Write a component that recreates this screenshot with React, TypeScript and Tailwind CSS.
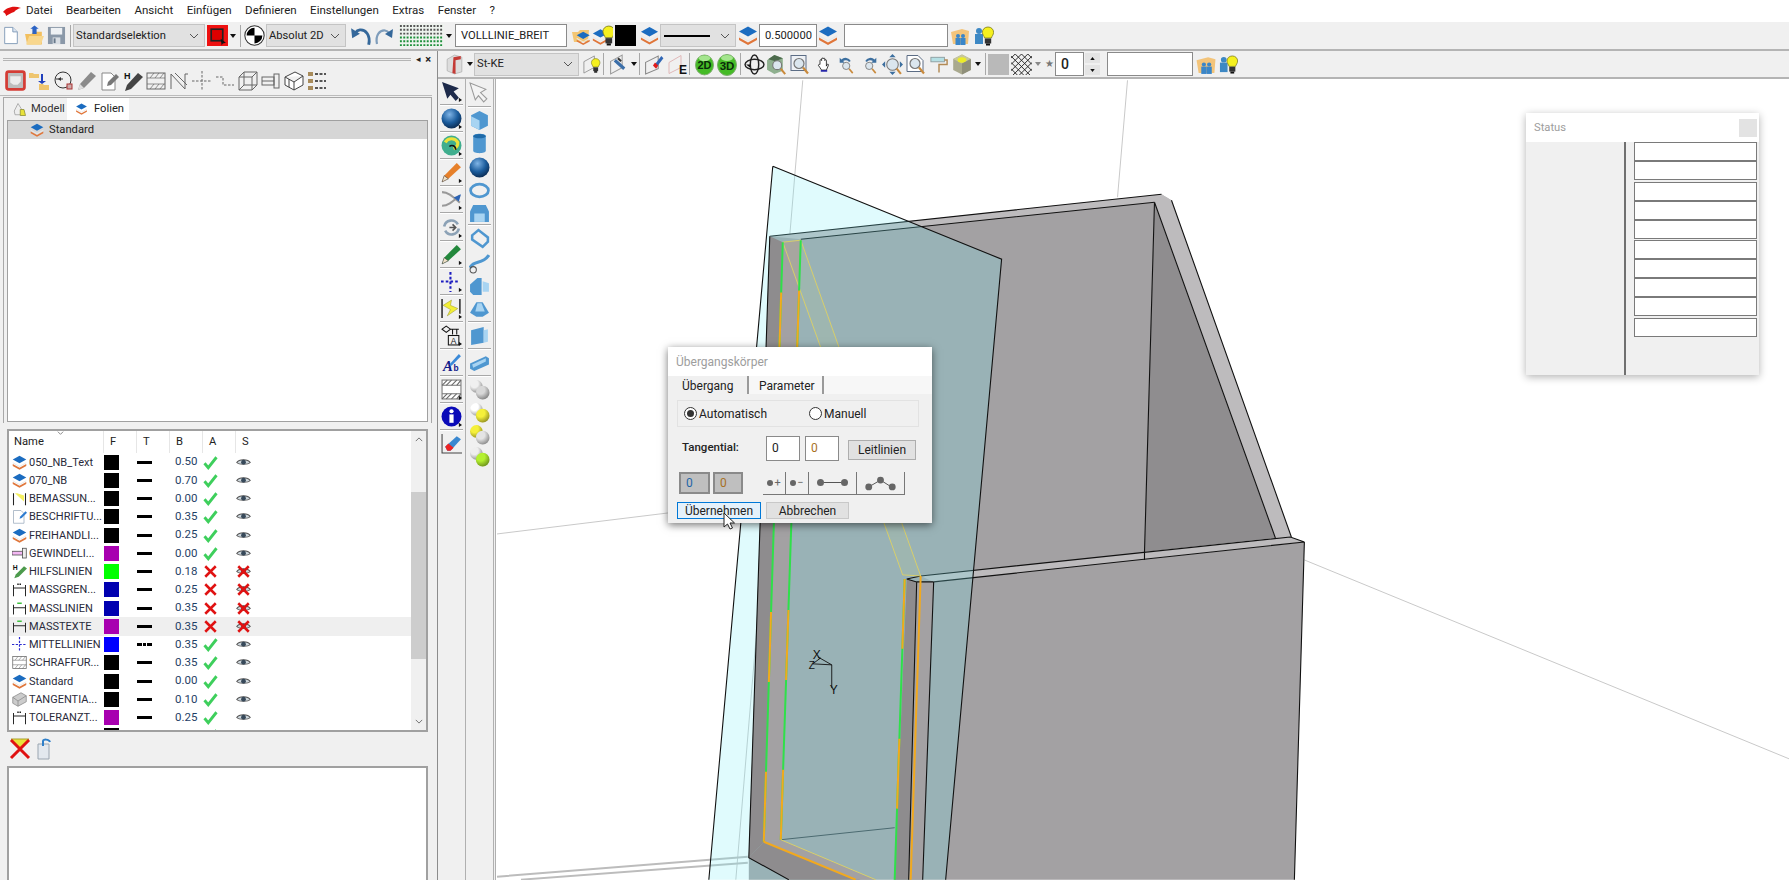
import type { ReactNode } from "react";

type P = { className?: string };

const Svg = ({ className, children }: P & { children: ReactNode }) => (
  <svg viewBox="0 0 20 20" className={`shrink-0 ${className ?? ""}`}>
    {children}
  </svg>
);

// shared icon parts
const Stack = () => (
  <>
    <path d="M10 1 19 6 10 11 1 6z" fill="#1b6cc0" />
    <path d="M1 9.500 10 14.500 19 9.500 19 11 10 16 1 11z" fill="#e9e9e9" />
    <path d="M1 12 10 17 19 12 19 14.500 10 19.500 1 14.500z" fill="#e0763a" />
  </>
);
const BulbShape = () => (
  <>
    <path d="M13 1c3.300 0 5.600 2.400 5.600 5.300 0 2.400-1.600 3.600-2.200 5.700h-6.800c-.6-2.100-2.200-3.300-2.200-5.700C7.400 3.400 9.700 1 13 1z" fill="#f5f01e" stroke="#7a7a20" strokeWidth=".8" />
    <rect x="9.800" y="12.500" width="6.400" height="5" fill="#333" />
    <rect x="11" y="17.500" width="4" height="2" fill="#111" />
  </>
);
const Layers = (p: P) => <Svg {...p}><Stack /></Svg>;
const LayersBulb = (p: P) => (
  <Svg {...p}>
    <g transform="scale(.8) translate(0 4)"><Stack /></g>
    <g transform="translate(3 0)"><BulbShape /></g>
  </Svg>
);
const FolderLayers = (p: P) => (
  <Svg {...p}>
    <path d="M1 6h6l2-2h9l-1 12H3z" fill="#f3c673" />
    <g transform="translate(5 5) scale(.72)"><Stack /></g>
  </Svg>
);
const FolderPeople = (p: P) => (
  <Svg {...p}>
    <path d="M1 6 12 3l7 2-1 13H3z" fill="#f3c47a" />
    <g fill="#3a86c8">
      <circle cx="8" cy="10" r="2" /><rect x="5.500" y="12" width="5" height="7" />
      <circle cx="13" cy="10" r="2" /><rect x="10.500" y="12" width="5" height="7" />
    </g>
  </Svg>
);
const PeopleBulb = (p: P) => (
  <Svg {...p}>
    <g fill="#3d88c4"><circle cx="5" cy="5" r="3" /><rect x="1" y="8" width="8" height="10" /></g>
    <g transform="translate(1 0)"><BulbShape /></g>
  </Svg>
);
const Arrow = ({ className, gray }: P & { gray?: boolean }) => (
  <svg viewBox="0 0 6 4" className={`shrink-0 ${className ?? ""}`}>
    <path d="M0 0h6L3 4z" fill={gray ? "#888" : "#111"} />
  </svg>
);
const Chevron = ({ className }: P) => (
  <svg viewBox="0 0 10 6" className={`shrink-0 ${className ?? ""}`}>
    <path d="M1 1l4 4 4-4" fill="none" stroke="#555" strokeWidth="1" />
  </svg>
);
const Sep = ({ className }: P) => <div className={`h-[22px] w-px shrink-0 bg-[#a8a8a8] ${className ?? ""}`} />;

const Combo = ({ className, children }: P & { children?: ReactNode }) => (
  <div className={`flex h-[23px] shrink-0 items-center justify-between border border-[#c4c4c4] bg-[#e1e1e1] pl-[2px] pr-[5px] text-[#222] ${className ?? ""}`}>
    <span className="flex-1">{children}</span>
    <Chevron className="h-[6px] w-[10px]" />
  </div>
);
const Field = ({ className, children }: P & { children?: ReactNode }) => (
  <div className={`flex h-[23px] shrink-0 items-center border border-[#8a8a8a] bg-white pl-[5px] text-[#222] ${className ?? ""}`}>{children}</div>
);

// row 1 icons
const NewDoc = (p: P) => (
  <Svg {...p}><path d="M3 1h9l5 5v13H3z" fill="#fff" stroke="#7d97b5" /><path d="M12 1v5h5" fill="#dbe6f2" stroke="#7d97b5" /></Svg>
);
const OpenFolder = (p: P) => (
  <Svg {...p}>
    <path d="M1 8h6l2-2h8v12H3z" fill="#f2bf5e" />
    <path d="M2 18 5 10h14l-3 8z" fill="#f8d78e" />
    <path d="M8 8V3h-2l4-3 4 3h-2v5z" fill="#2c63c4" />
  </Svg>
);
const Save = (p: P) => (
  <Svg {...p}><path d="M1 1h18v18H1z" fill="#8a98a8" /><rect x="4" y="2" width="12" height="7" fill="#eef1f4" /><rect x="6" y="12" width="8" height="7" fill="#d8dde3" /><rect x="7" y="13" width="2" height="5" fill="#67788a" /></Svg>
);
const RedBtn = (p: P) => (
  <Svg {...p}><rect width="20" height="20" fill="#ee1111" /><rect x="4" y="4" width="11" height="11" fill="#d00" stroke="#222" strokeWidth="1.600" /><path d="M13 13l5 4-3 .5-1 2z" fill="#111" /></Svg>
);
const Target = (p: P) => (
  <Svg {...p}><circle cx="10" cy="10" r="9.200" fill="#fff" stroke="#333" /><path d="M10 2.500a7.500 7.500 0 0 0-7.500 7.500H10zM10 10v7.500a7.500 7.500 0 0 0 7.500-7.500z" fill="#000" /></Svg>
);
const Undo = (p: P) => (
  <Svg {...p}><path d="M17 18C19 9 14 4 9 4.500 7.500 4.700 6 5.500 5 7" fill="none" stroke="#35689a" strokeWidth="2.600" /><path d="M1 3l1 9 7-4z" fill="#35689a" /></Svg>
);
const Redo = (p: P) => (
  <Svg {...p}><path d="M3 18C1 9 6 4 11 4.500c1.500.2 3 1 4 2.500" fill="none" stroke="#7f9dbb" strokeWidth="2.200" /><path d="M19 3l-1 9-7-4z" fill="#35689a" /></Svg>
);
const DotGrid = ({ className }: P) => (
  <svg viewBox="0 0 47 24" className={`shrink-0 ${className ?? ""}`}>
    <rect width="47" height="24" fill="#eef3ee" />
    {[2, 6, 10, 14, 18, 22].map((y) => (
      <line key={y} x1="1" x2="46" y1={y} y2={y} stroke={y > 13 ? "#1d8f3a" : "#555"} strokeWidth="2" strokeDasharray="2 1.500" />
    ))}
  </svg>
);

// row 2 icons
const PartIcon = (p: P) => (
  <Svg {...p}>
    <path d="M3 5 10 1 17 3v14l-7 2-7-3z" fill="#ddd" stroke="#999" strokeWidth=".5" />
    <path d="M9 3l7-1v3l-5 1v13l-3-1z" fill="#c43a35" />
  </Svg>
);
const PlaneOutline = () => <path d="M2 7 13 1v12L2 19z" fill="none" stroke="#9a9a9a" />;
const PlaneBulb = (p: P) => (
  <Svg {...p}><PlaneOutline /><g transform="translate(4 3) scale(.8)"><BulbShape /></g></Svg>
);
const PlaneTool = (p: P) => (
  <Svg {...p}><PlaneOutline /><path d="M6 6l9 8" stroke="#3b6ea8" strokeWidth="3" /><path d="M9 4l3 3" stroke="#333" strokeWidth="2" /></Svg>
);
const PlanePencil = (p: P) => (
  <Svg {...p}><path d="M2 8 14 2v12L2 19z" fill="none" stroke="#888" /><path d="M10 11 17 2l2 2-7 9z" fill="#2f66b5" /><path d="M9 11l3 3 2-3-3-3z" fill="#e01b1b" /></Svg>
);
const PlaneE = (p: P) => (
  <Svg {...p}><path d="M1 8 13 1v12L1 19z" fill="none" stroke="#e0b8b8" /><text x="11" y="19" fontSize="12" fontWeight="700" fontFamily="Liberation Sans" fill="#111">E</text></Svg>
);
const Dim = ({ className, label }: P & { label: string }) => (
  <svg viewBox="0 0 20 24" className={`shrink-0 ${className ?? ""}`}>
    <ellipse cx="10" cy="13" rx="9.500" ry="10.500" fill="#45bb26" stroke="#7fae70" />
    <ellipse cx="10" cy="6" rx="6" ry="3" fill="#a4e58e" />
    <text x="10" y="17.500" textAnchor="middle" fontSize="11.500" fontWeight="700" fontFamily="Liberation Sans" fill="#0a2a0a">{label}</text>
  </svg>
);
const Orbit = (p: P) => (
  <Svg {...p}><ellipse cx="10" cy="10" rx="9" ry="5" fill="none" stroke="#222" strokeWidth="1.400" /><ellipse cx="10" cy="10" rx="4" ry="9" fill="none" stroke="#222" strokeWidth="1.400" /><path d="M2 10l4 3v-3z" fill="#111" /></Svg>
);
const Lens = () => (
  <>
    <circle cx="9" cy="9" r="5" fill="#dbe6ee" stroke="#777" strokeWidth="1.200" />
    <path d="M13 13l5 6" stroke="#c98a3c" strokeWidth="2.200" />
  </>
);
const BoxZoom = (p: P) => (
  <Svg {...p}><path d="M1 6 8 1l8 3v12l-8 3-7-4z" fill="#8fb08f" /><path d="M8 1l8 3-7 3-7-2z" fill="#4c6a4c" /><g transform="translate(3 3) scale(.85)"><Lens /></g></Svg>
);
const WinZoom = (p: P) => (
  <Svg {...p}><rect x="1" y="1" width="15" height="15" fill="#eef1f5" stroke="#5c6d85" /><Lens /></Svg>
);
const Hand = (p: P) => (
  <Svg {...p}>
    <path d="M5 10V5a1 1 0 0 1 2 0V3a1 1 0 0 1 2 0v0a1 1 0 0 1 2 0v2a1 1 0 0 1 2 0v7l1-2c1-1 2 0 1.500 1L13 17H7l-2-3-2-3c0-1 1-1.500 2-1z" fill="#fff" stroke="#111" />
    <rect x="6" y="17" width="8" height="2" fill="#1b1ba8" />
  </Svg>
);
const RotZoom = ({ className, flip }: P & { flip?: boolean }) => (
  <Svg className={className}>
    <g transform={flip ? "translate(20 0) scale(-1 1)" : undefined}>
      <path d="M15 6A7 7 0 0 0 4 4L2 2v6h6L6 6a5 5 0 0 1 7 1z" fill="#3d6f9f" />
    </g>
    <g transform="translate(2 4) scale(.85)"><Lens /></g>
  </Svg>
);
const PanZoom = (p: P) => (
  <Svg {...p}>
    <path d="M10 0l3 3H7zM10 20l-3-3h6zM0 10l3-3v6zM20 10l-3 3V7z" fill="#3d6f9f" />
    <circle cx="10" cy="10" r="5.500" fill="#dbe6ee" stroke="#777" />
    <path d="M14 14l4 5" stroke="#c98a3c" strokeWidth="2" />
  </Svg>
);
const PageZoom = (p: P) => (
  <Svg {...p}><path d="M1 1h11l5 5v11H1z" fill="#fff" stroke="#5c6d85" /><Lens /></Svg>
);
const Roller = (p: P) => (
  <Svg {...p}><rect x="1" y="2" width="15" height="5" fill="#b5e0e4" stroke="#8c9c9e" /><path d="M16 5h3v5h-9v9" fill="none" stroke="#b28a55" strokeWidth="1.600" /></Svg>
);
const YellowCube = (p: P) => (
  <Svg {...p}><path d="M2 5 10 1l8 4v10l-8 4-8-4z" fill="#a9a98e" /><path d="M2 5 10 1l8 4-8 4z" fill="#c8c89a" /><ellipse cx="10" cy="6" rx="4" ry="2.500" fill="#ecec28" /><path d="M10 9v10l8-4V5z" fill="#8f8f7a" /></Svg>
);
const Hatch = (p: P) => (
  <Svg {...p}>
    <path d="M0 4 4 0M0 10 10 0M0 16 16 0M2 20 20 2M8 20 20 8M14 20 20 14M0 2 18 20M0 8 12 20M0 14 6 20M4 0 20 16M10 0 20 10M16 0 20 4" stroke="#222" strokeWidth=".9" fill="none" />
  </Svg>
);

// dock icons
const G = "#666";
const Gs = { fill: "none", stroke: G, strokeWidth: 1 };
const RedFrame = (p: P) => (
  <Svg {...p}><rect x="1.500" y="1.500" width="17" height="17" rx="2" fill="#bdbdbd" stroke="#d43c35" strokeWidth="2.600" /><path d="M5 6h10v5l-3 3H8l-3-2z" fill="#ececec" /></Svg>
);
const FolderDown = (p: P) => (
  <Svg {...p}><path d="M0 2h4l1 1h5v4H0zM10 13h4l1 1h5v5H10z" fill="#eec56e" /><path d="M12 3v7H9l4 3 4-3h-3V3z" fill="#1f3fbc" /></Svg>
);
const Gauge = (p: P) => (
  <Svg {...p}><circle cx="9" cy="9" r="8" {...Gs} stroke="#333" /><path d="M2 8h7" stroke="#333" /><path d="M4 8l3-2v4z" fill="#333" /><rect x="13" y="13" width="5" height="5" fill="#caa" stroke="#a33" /></Svg>
);
const GrayPencil = (p: P) => (
  <Svg {...p}><path d="M14 1l5 4L7 17l-6 2 2-6z" fill="#8b8b8b" /><path d="M3 13l4 4-6 2z" fill="#ddd" /></Svg>
);
const DocPencil = (p: P) => (
  <Svg {...p}><path d="M2 2h9l4 4v13H2z" fill="#fff" stroke="#888" /><path d="M16 3l3 3-8 8-4 1 1-4z" fill="#777" /></Svg>
);
const HPencil = (p: P) => (
  <Svg {...p}><path d="M15 2l5 4L8 18l-6 2 2-6z" fill="#444" /><text x="1" y="8" fontSize="9" fontWeight="700" fontFamily="Liberation Sans" fill="#111">H</text></Svg>
);
const HatchBox = (p: P) => (
  <Svg {...p}><rect x="1" y="2" width="18" height="16" {...Gs} /><path d="M1 7h18M1 13h18M4 7l4-5M9 7l4-5M14 7l4-5M4 18l4-5M9 18l4-5M14 18l4-5" {...Gs} strokeWidth=".7" /></Svg>
);
const NShape = (p: P) => (
  <Svg {...p}><path d="M2 3v15M2 3l14 15V3M6 2l12 12M16 3l3 0" {...Gs} /></Svg>
);
const CrossDash = (p: P) => (
  <Svg {...p}><path d="M0 10h20M10 0v20" {...Gs} strokeDasharray="2.500 1.500" /></Svg>
);
const StepDash = (p: P) => (
  <Svg {...p}><path d="M1 6h7v8h11" {...Gs} strokeDasharray="2.500 1.500" /></Svg>
);
const WireCube = (p: P) => (
  <Svg {...p}><path d="M1 6h13v13H1zM6 1h13v13H6zM1 6l5-5M14 6l5-5M14 19l5-5M1 19l5-5" {...Gs} /></Svg>
);
const Bolt = (p: P) => (
  <Svg {...p}><rect x="1" y="6" width="12" height="8" {...Gs} /><path d="M1 10h12" {...Gs} /><rect x="13" y="3" width="5" height="14" {...Gs} /></Svg>
);
const SolidBox = (p: P) => (
  <Svg {...p}><path d="M1 6 11 1l8 4v9l-9 5-9-5zM1 6l9 5 9-6M10 11v8M5 8l0 8" fill="#fff" stroke="#444" /></Svg>
);
const DotList = (p: P) => (
  <Svg {...p}>
    {[3, 10, 17].map((y) => (
      <g key={y}><rect x="1" y={y - 2} width="5" height="4" fill="#a88b5a" /><path d={`M8 ${y}h11`} stroke="#222" strokeWidth="1.600" strokeDasharray="3 1.500" /></g>
    ))}
  </Svg>
);
const ModelIcon = (p: P) => (
  <Svg {...p}><path d="M3 12 8 2l5 8v7H4z" fill="#eee" stroke="#999" /><path d="M11 10h5l2 8h-7z" fill="#e8e23a" stroke="#8a8a30" /></Svg>
);

// table icons
const DimIcon = (p: P) => (
  <Svg {...p}><path d="M2 3v16M18 3v16" stroke="#222" strokeWidth="1.400" /><path d="M4 3l12 11v-8L7 3z" fill="#f5f060" /></Svg>
);
const DocBlue = (p: P) => (
  <Svg {...p}><path d="M2 2h10l4 4v13H2z" fill="#fff" stroke="#9ab" /><path d="M18 3l2 2-7 7-3 1 1-3z" fill="#2d7bd0" /></Svg>
);
const Thread = (p: P) => (
  <Svg {...p}><rect x="0" y="7" width="14" height="5" fill="#f3b8f3" stroke="#444" /><rect x="14" y="3" width="5" height="13" fill="#eee" stroke="#444" /></Svg>
);
const HGreen = (p: P) => (
  <Svg {...p}><path d="M16 3l4 3L9 17l-6 2 2-5z" fill="#4c9a4c" /><text x="1" y="8" fontSize="9" fontWeight="700" fontFamily="Liberation Sans" fill="#111">H</text></Svg>
);
const Bracket = (p: P) => (
  <Svg {...p}><path d="M2 4v15M18 4v15M2 8h16" stroke="#222" strokeWidth="1.300" /><path d="M7 3h6" stroke="#222" strokeWidth="2" strokeDasharray="2 1" /></Svg>
);
const BracketG = (p: P) => (
  <Svg {...p}><path d="M2 5v13M18 5v13M2 9h16" stroke="#222" strokeWidth="1.300" /><path d="M7 3h6" stroke="#3fc13f" strokeWidth="2" /></Svg>
);
const CrossBlue = (p: P) => (
  <Svg {...p}><path d="M0 10h20M10 0v20" fill="none" stroke="#2a2ad0" strokeWidth="1.600" strokeDasharray="3 2" /></Svg>
);
const BoxGray = (p: P) => (
  <Svg {...p}><path d="M1 7 12 1l7 4v8L8 19l-7-4z" fill="#ccc" stroke="#888" /><path d="M1 7l7 5 11-7M8 12v7" fill="none" stroke="#888" /></Svg>
);
const Check = (p: P) => (
  <Svg {...p}><path d="M2 11l5 6L18 3" fill="none" stroke="#3ecf5c" strokeWidth="3.800" /></Svg>
);
const XMark = (p: P) => (
  <Svg {...p}><path d="M3 3l14 14M17 3 3 17" fill="none" stroke="#e01212" strokeWidth="3.400" /></Svg>
);
const Eye = ({ className, off }: P & { off?: boolean }) => (
  <Svg className={className}>
    <path d="M1 10c3-5 15-5 18 0-3 3-15 3-18 0z" fill="#cdd6dc" stroke="#555" strokeWidth="1.400" />
    <circle cx="10" cy="9.500" r="3.200" fill="#37495a" />
    {off && <path d="M3 3l14 14M17 3 3 17" fill="none" stroke="#e01212" strokeWidth="3.400" />}
  </Svg>
);

// vertical toolbar icons
const Mini = () => <path d="M17 16l3 2-3 2z" fill="#111" />;
const DarkArrow = (p: P) => (
  <Svg {...p}><path d="M1 1l16 6-5 3 5 6-3 3-5-6-3 4z" fill="#1d2a4a" /><Mini /></Svg>
);
const WhiteArrow = (p: P) => (
  <Svg {...p}><path d="M1 1l15 6-5 3 6 6-3 3-5-6-3 4z" fill="#f4f4f4" stroke="#9a9a9a" /></Svg>
);
const BlueBall = (p: P) => (
  <Svg {...p}><circle cx="10" cy="10" r="9.500" fill="url(#ballBlue)" /><Mini /></Svg>
);
const SwirlBall = (p: P) => (
  <Svg {...p}><circle cx="10" cy="10" r="9.500" fill="#3fae8e" /><path d="M4 7a7 7 0 0 1 12 0 6 6 0 0 1-4 6" fill="none" stroke="#ece23a" strokeWidth="3" /><path d="M8 11c2-2 6-1 6 3" fill="none" stroke="#111" strokeWidth="1.500" /><Mini /></Svg>
);
const ColPencil = ({ className, color }: P & { color: string }) => (
  <Svg className={className}>
    <path d="M15 1l4 4L7 16l-6 3 2-6z" fill={color} />
    <path d="M3 13l4 3-6 3z" fill="#f1e2c8" stroke="#333" strokeWidth=".5" />
    <Mini />
  </Svg>
);
const Scissors = (p: P) => (
  <Svg {...p}><path d="M1 3c6 0 10 4 17 10M1 16c6 0 10-4 17-10" fill="none" stroke="#999" strokeWidth="2" /><path d="M12 8l7-3-2 7z" fill="#2b63b5" /><Mini /></Svg>
);
const Rotate = (p: P) => (
  <Svg {...p}><path d="M3 9a7 7 0 0 1 13-2M17 11a7 7 0 0 1-13 2" fill="none" stroke="#8ca2b6" strokeWidth="2.500" /><path d="M8 10h6M11 7l3 3-3 3" fill="none" stroke="#555" strokeWidth="1.500" /><Mini /></Svg>
);
const BlueCross = (p: P) => (
  <Svg {...p}><path d="M0 10h18M9 1v19" fill="none" stroke="#1c1cc0" strokeWidth="2" strokeDasharray="2.500 2" /><Mini /></Svg>
);
const YellowDim = (p: P) => (
  <Svg {...p}><path d="M1 1v18M18 1v14" stroke="#222" strokeWidth="1.400" /><path d="M2 7 10 2l-1 5 7 3-10 7 3-6z" fill="#f2ee35" stroke="#9a9a30" strokeWidth=".5" /><Mini /></Svg>
);
const TextBox = (p: P) => (
  <Svg {...p}>
    <path d="M1 4l4-3 4 3-4 3z" fill="none" stroke="#111" /><path d="M9 4h8M11 4v5M15 4v5" stroke="#111" />
    <rect x="7" y="10" width="10" height="9" fill="none" stroke="#111" />
    <text x="12" y="18" textAnchor="middle" fontSize="8" fontFamily="Liberation Sans" fill="#111">A</text>
    <Mini />
  </Svg>
);
const ABTool = (p: P) => (
  <Svg {...p}>
    <text x="2" y="18" fontSize="14" fontWeight="700" fontStyle="italic" fontFamily="Liberation Serif" fill="#111a8a">A</text>
    <text x="12" y="18" fontSize="8" fontWeight="700" fontFamily="Liberation Sans" fill="#111a8a">b</text>
    <path d="M8 12 17 2l2 2-9 9z" fill="#3b8ad8" />
  </Svg>
);
const HatchTool = (p: P) => (
  <Svg {...p}><rect x="1" y="1" width="18" height="18" fill="#fff" stroke="#777" /><path d="M1 6l5-5M5 6l5-5M10 6l5-5M15 6l4-5M1 19l5-5M5 19l5-5M10 19l5-5M15 19l4-5" stroke="#666" /><path d="M1 6h18M1 14h18" stroke="#777" /><Mini /></Svg>
);
const InfoTool = (p: P) => (
  <Svg {...p}><circle cx="10" cy="10" r="9.500" fill="#0a0ab8" /><rect x="8" y="8" width="4" height="8" fill="#fff" /><circle cx="10" cy="5" r="2" fill="#fff" /><Mini /></Svg>
);
const EraserTool = (p: P) => (
  <Svg {...p}><path d="M1 1v18h19" fill="none" stroke="#444" /><path d="M4 13 15 3l4 3-10 11H6z" fill="#3a88d0" /><path d="M4 13l3-3 5 4-3 3H6z" fill="#e22" /></Svg>
);
const Sol = ({ className, d, d2 }: P & { d: string; d2: string }) => (
  <Svg className={className}><path d={d} fill="#4f97d0" /><path d={d2} fill="#a8d4f2" /></Svg>
);
const TwoBalls = ({ className, a, b }: P & { a: string; b: string }) => (
  <Svg className={className}>
    <circle cx="7" cy="7" r="6" fill={a} /><circle cx="7" cy="7" r="6" fill="url(#ballShade)" />
    <circle cx="13" cy="13" r="6.500" fill={b} /><circle cx="13" cy="13" r="6.500" fill="url(#ballShade)" />
  </Svg>
);

const rows: { i: (p: P) => ReactNode; n: string; c: string; b: string; on: boolean; dash?: boolean; hl?: boolean }[] = [
  { i: Layers, n: "050_NB_Text", c: "bg-black", b: "0.50", on: true },
  { i: Layers, n: "070_NB", c: "bg-black", b: "0.70", on: true },
  { i: DimIcon, n: "BEMASSUN...", c: "bg-black", b: "0.00", on: true },
  { i: DocBlue, n: "BESCHRIFTU...", c: "bg-black", b: "0.35", on: true },
  { i: Layers, n: "FREIHANDLI...", c: "bg-black", b: "0.25", on: true },
  { i: Thread, n: "GEWINDELI...", c: "bg-[#a800b0]", b: "0.00", on: true },
  { i: HGreen, n: "HILFSLINIEN", c: "bg-[#00ff00]", b: "0.18", on: false },
  { i: Bracket, n: "MASSGREN...", c: "bg-[#0000b0]", b: "0.25", on: false },
  { i: BracketG, n: "MASSLINIEN", c: "bg-[#0000b0]", b: "0.35", on: false },
  { i: BracketG, n: "MASSTEXTE", c: "bg-[#a800b0]", b: "0.35", on: false, hl: true },
  { i: CrossBlue, n: "MITTELLINIEN", c: "bg-[#0000ff]", b: "0.35", on: true, dash: true },
  { i: HatchBox, n: "SCHRAFFUR...", c: "bg-black", b: "0.35", on: true },
  { i: Layers, n: "Standard", c: "bg-black", b: "0.00", on: true },
  { i: BoxGray, n: "TANGENTIA...", c: "bg-black", b: "0.10", on: true },
  { i: Bracket, n: "TOLERANZT...", c: "bg-[#a800b0]", b: "0.25", on: true },
  { i: () => null, n: "", c: "bg-black", b: "", on: true },
];

const TableRow = ({ r }: { r: (typeof rows)[number] }) => {
  const Icon = r.i;
  return (
    <div className={`flex h-[18.25px] shrink-0 items-center text-[11px] ${r.hl ? "bg-[#efefef]" : ""}`}>
      <div className="ml-[3px] flex w-[15px] shrink-0">
        <Icon className="h-[15px] w-[15px]" />
      </div>
      <span className="ml-[2px] w-[75px] shrink-0 whitespace-nowrap text-[#2a2a3a]">{r.n}</span>
      <div className={`h-[15px] w-[15px] shrink-0 ${r.c}`} />
      {r.dash ? (
        <div className="ml-[18px] flex w-[15px] shrink-0 gap-px">
          <div className="h-[3px] w-[5px] bg-black" /><div className="h-[3px] w-[3px] bg-black" /><div className="h-[3px] w-[5px] bg-black" />
        </div>
      ) : (
        <div className="ml-[18px] h-[3px] w-[15px] shrink-0 bg-black" />
      )}
      <span className="ml-[23px] w-[28px] shrink-0 text-[11.500px] text-[#1f3f66]">{r.b}</span>
      {r.on ? <Check className="h-[15px] w-[15px]" /> : <XMark className="h-[15px] w-[15px]" />}
      <Eye off={!r.on} className="ml-[18px] h-[15px] w-[15px]" />
    </div>
  );
};

const Menu = () => (
  <div className="flex h-[22px] shrink-0 items-center bg-white pl-[3px] text-[11.500px] text-[#222]">
    <svg viewBox="0 0 18 10" className="h-[10px] w-[18px] shrink-0">
      <path d="M0 6C3 2 10-1 18 2c-3 .5-5 2-7 4-3 1-5 2-8 4 0-2-1-3-3-4z" fill="#e01010" />
    </svg>
    <div className="ml-[5px] flex gap-[13.500px]">
      {["Datei", "Bearbeiten", "Ansicht", "Einfügen", "Definieren", "Einstellungen", "Extras", "Fenster", "?"].map((m) => (
        <span key={m}>{m}</span>
      ))}
    </div>
  </div>
);

const TopToolbar = () => (
  <div className="flex h-[29px] shrink-0 items-center border-b-2 border-[#b4b4b4] bg-[#f0f0f0]">
    <NewDoc className="ml-[2px] h-[23px] w-[18px]" />
    <OpenFolder className="ml-[4px] h-[22px] w-[21px]" />
    <Save className="ml-[2px] h-[21px] w-[19px]" />
    <Sep className="ml-[4px]" />
    <Combo className="ml-[2px] w-[132px]">Standardselektion</Combo>
    <RedBtn className="ml-[2px] h-[21px] w-[21px]" />
    <Arrow className="ml-[2px] h-[4px] w-[6px]" />
    <Sep className="ml-[4px]" />
    <Target className="ml-[3px] h-[21px] w-[21px]" />
    <Combo className="ml-px w-[80px]">Absolut 2D</Combo>
    <Undo className="ml-[4px] h-[22px] w-[22px]" />
    <Redo className="ml-[2px] h-[22px] w-[20px]" />
    <DotGrid className="ml-[4px] h-[23px] w-[47px]" />
    <Arrow className="ml-px h-[4px] w-[6px]" />
    <Field className="ml-[3px] w-[112px]">VOLLLINIE_BREIT</Field>
    <FolderLayers className="ml-[4px] h-[20px] w-[20px]" />
    <LayersBulb className="ml-px h-[21px] w-[21px]" />
    <div className="ml-[2px] h-[21px] w-[21px] shrink-0 bg-black" />
    <Layers className="ml-[4px] h-[21px] w-[19px]" />
    <Combo className="ml-px w-[76px]">
      <div className="mx-[1px] h-[2px] w-[46px] bg-black" />
    </Combo>
    <Layers className="ml-[2px] h-[21px] w-[20px]" />
    <Field className="ml-px w-[58px] pl-[4px] text-[#1f3f66]">0.500000</Field>
    <Layers className="ml-px h-[21px] w-[20px]" />
    <Field className="ml-[6px] w-[104px]" />
    <FolderPeople className="ml-[2px] h-[20px] w-[20px]" />
    <PeopleBulb className="ml-[4px] h-[22px] w-[20px]" />
  </div>
);

const ViewToolbar = () => (
  <div className="flex h-[28px] shrink-0 items-center border-b-2 border-[#b4b4b4] bg-[#f0f0f0]">
    <PartIcon className="ml-[6px] h-[21px] w-[21px]" />
    <Arrow className="ml-[2px] h-[4px] w-[6px]" />
    <Combo className="ml-px h-[22px] w-[105px]">St-KE</Combo>
    <PlaneBulb className="ml-[3px] h-[21px] w-[19px]" />
    <Sep className="ml-[2px]" />
    <PlaneTool className="ml-[4px] h-[21px] w-[22px]" />
    <Arrow className="ml-px h-[4px] w-[6px]" />
    <Sep className="ml-[2px]" />
    <PlanePencil className="ml-[3px] h-[21px] w-[22px]" />
    <PlaneE className="ml-[3px] h-[21px] w-[20px]" />
    <Sep className="ml-px" />
    <Dim label="2D" className="ml-[5px] h-[24px] w-[19px]" />
    <Dim label="3D" className="ml-[3px] h-[24px] w-[20px]" />
    <Sep className="ml-[3px]" />
    <Orbit className="ml-[3px] h-[21px] w-[21px]" />
    <BoxZoom className="ml-px h-[21px] w-[21px]" />
    <WinZoom className="ml-[3px] h-[21px] w-[20px]" />
    <Hand className="ml-[6px] h-[23px] w-[16px]" />
    <RotZoom className="ml-[6px] h-[21px] w-[17px]" />
    <RotZoom flip className="ml-[6px] h-[21px] w-[17px]" />
    <PanZoom className="ml-[4px] h-[21px] w-[21px]" />
    <PageZoom className="ml-[3px] h-[21px] w-[20px]" />
    <Roller className="ml-[4px] h-[21px] w-[18px]" />
    <YellowCube className="ml-[3px] h-[23px] w-[22px]" />
    <Arrow className="ml-[2px] h-[4px] w-[6px]" />
    <Sep className="ml-[4px]" />
    <div className="ml-[2px] h-[21px] w-[21px] shrink-0 bg-[#b9b9b9]" />
    <Hatch className="ml-[2px] h-[21px] w-[21px]" />
    <Arrow gray className="ml-[3px] h-[4px] w-[6px]" />
    <span className="ml-[4px] w-[9px] text-[10px] text-[#777]">★</span>
    <Field className="ml-px h-[24px] w-[29px] text-[14px] font-medium">0</Field>
    <div className="ml-px flex w-[15px] shrink-0 flex-col gap-[2px]">
      <div className="flex h-[10px] items-center justify-center bg-[#e4e4e4]"><Arrow className="h-[3px] w-[5px] rotate-180" /></div>
      <div className="flex h-[10px] items-center justify-center bg-[#e4e4e4]"><Arrow className="h-[3px] w-[5px]" /></div>
    </div>
    <Field className="ml-[7px] h-[24px] w-[86px]" />
    <FolderPeople className="ml-[2px] h-[21px] w-[22px]" />
    <PeopleBulb className="ml-[2px] h-[23px] w-[19px]" />
  </div>
);

const LeftDock = () => (
  <div className="flex w-[438px] shrink-0 flex-col border-r border-[#8c8c8c] bg-[#f0f0f0] pr-[9px]">
    {/* grip */}
    <div className="-mr-[4px] flex h-[16px] shrink-0 items-center pl-[3px] pr-[1px]">
      <div className="h-[3px] flex-1 border-y border-[#b5b5b5]" />
      <span className="ml-[5px] text-[9px] leading-none text-[#222]">◂</span>
      <span className="ml-[4px] text-[11px] font-bold leading-none text-[#222]">×</span>
    </div>
    {/* tool icons */}
    <div className="-mr-[4px] flex h-[29px] shrink-0 items-center gap-[3px] border-b border-[#bbbbbb] pb-px pl-[5px]">
      <RedFrame className="h-[21px] w-[21px]" />
      <FolderDown className="h-[20px] w-[20px]" />
      <Gauge className="ml-[2px] h-[20px] w-[20px]" />
      <GrayPencil className="h-[20px] w-[20px]" />
      <DocPencil className="h-[20px] w-[20px]" />
      <HPencil className="h-[20px] w-[20px]" />
      <HatchBox className="h-[20px] w-[20px]" />
      <NShape className="h-[20px] w-[20px]" />
      <CrossDash className="h-[20px] w-[20px]" />
      <StepDash className="h-[20px] w-[20px]" />
      <WireCube className="h-[20px] w-[20px]" />
      <Bolt className="h-[20px] w-[20px]" />
      <SolidBox className="h-[20px] w-[20px]" />
      <DotList className="h-[20px] w-[20px]" />
    </div>
    {/* tab pane */}
    <div className="-mr-[4px] ml-[3px] mt-px flex h-[326px] shrink-0 flex-col border border-b-0 border-[#a8a8a8]">
      <div className="flex h-[22px] shrink-0 items-center pl-[2px]">
        <div className="flex h-[22px] w-[61px] items-center gap-[4px] pl-[6px]">
          <ModelIcon className="h-[15px] w-[15px]" />
          <span className="text-[#333]">Modell</span>
        </div>
        <div className="flex h-[22px] w-[62px] items-center gap-[6px] bg-white pl-[8px]">
          <Layers className="h-[12px] w-[13px]" />
          <span className="text-[#222]">Folien</span>
        </div>
      </div>
      <div className="ml-[3px] mr-[3px] h-[302px] border border-[#a0a0a0] bg-white">
        <div className="flex h-[18px] items-center bg-[#d6d6d6] pl-[22px]">
          <Layers className="h-[14px] w-[14px]" />
          <span className="ml-[5px] text-[#222]">Standard</span>
        </div>
      </div>
    </div>
    {/* layer table */}
    <div className="ml-[7px] mt-[6px] flex h-[303px] shrink-0 overflow-hidden border-2 border-[#a0a0a0] bg-white">
      <div className="relative flex flex-1 flex-col overflow-hidden">
        <div className="flex h-[22px] shrink-0 items-center text-[#222]">
          <span className="w-[94px] pl-[5px]">Name</span>
          <span className="h-full w-[33px] border-l border-[#e6e6e6] pl-[6px] leading-[22px]">F</span>
          <span className="h-full w-[33px] border-l border-[#e6e6e6] pl-[6px] leading-[22px]">T</span>
          <span className="h-full w-[33px] border-l border-[#e6e6e6] pl-[6px] leading-[22px]">B</span>
          <span className="h-full w-[33px] border-l border-[#e6e6e6] pl-[6px] leading-[22px]">A</span>
          <span className="h-full w-[33px] border-l border-[#e6e6e6] pl-[6px] leading-[22px]">S</span>
        </div>
        <Chevron className="absolute left-[48px] top-0 h-[4px] w-[7px]" />
        {rows.map((r, i) => (
          <TableRow key={i} r={r} />
        ))}
      </div>
      <div className="flex w-[15px] shrink-0 flex-col bg-[#f0f0f0]">
        <div className="flex h-[17px] items-center justify-center">
          <Chevron className="h-[5px] w-[8px] rotate-180" />
        </div>
        <div className="mt-[44px] h-[167px] bg-[#cdcdcd]" />
        <div className="flex-1" />
        <div className="flex h-[17px] items-center justify-center">
          <Chevron className="h-[5px] w-[8px]" />
        </div>
      </div>
    </div>
    {/* bottom tools */}
    <div className="flex h-[34px] shrink-0 items-center pl-[9px]">
      <svg viewBox="0 0 22 22" className="h-[22px] w-[22px] shrink-0">
        <path d="M2 1h18l-9 9z" fill="#e9e23a" stroke="#a9a030" />
        <path d="M2 2l18 18M20 2 2 20" stroke="#e01212" strokeWidth="3" />
      </svg>
      <svg viewBox="0 0 16 22" className="ml-[6px] h-[22px] w-[16px] shrink-0">
        <path d="M1 6h11v15H1z" fill="#e3e8ee" stroke="#9aa5b0" />
        <path d="M6 8V3c0-2 6-2 7 1" fill="none" stroke="#2f7fc9" strokeWidth="2" />
      </svg>
    </div>
    <div className="ml-[7px] flex-1 border-2 border-b-0 border-[#a0a0a0] bg-white" />
  </div>
);

const S = "h-[21px] w-[21px]";
const VSep = () => <div className="mx-[2px] h-[2px] shrink-0 self-stretch border-y border-y-[#a8a8a8] border-b-white" />;
const c1 = "flex h-[25.100px] shrink-0 items-center justify-center";
const c2 = "flex h-[23.500px] shrink-0 items-center justify-center";

const SideToolbars = () => (
  <div className="flex w-[57px] shrink-0 bg-[#f0f0f0]">
    <div className="flex w-[28px] shrink-0 flex-col border-r border-[#b0b0b0]">
      {[
        <DarkArrow className={S} />, <BlueBall className={S} />, <SwirlBall className={S} />,
        <ColPencil color="#e6802a" className={S} />, <Scissors className={S} />, <Rotate className={S} />,
        <ColPencil color="#23883c" className={S} />, <BlueCross className={S} />, <YellowDim className={S} />,
        <TextBox className={S} />, <ABTool className={S} />, <HatchTool className={S} />,
        <InfoTool className={S} />, <EraserTool className={S} />,
      ].map((el, i) => (
        <div key={i} className="contents">
          <div className={c1}>{el}</div>
          {i < 13 && <VSep />}
        </div>
      ))}
    </div>
    <div className="flex w-[28px] shrink-0 flex-col border-r border-[#b0b0b0]">
      <div className="flex h-[27px] shrink-0 items-center justify-center"><WhiteArrow className={S} /></div>
      <VSep />
      <div className="flex h-[24px] shrink-0 items-center justify-center">
        <Sol className={S} d="M2 5 10 1l8 4v10l-8 4-8-4z" d2="M2 6l8 4v9l-8-4z" />
      </div>
      <div className={c2}><svg viewBox="0 0 20 20" className={S}><path d="M4 3c0-3 12-3 12 0v14c0 3-12 3-12 0z" fill="#4f97d0" /><ellipse cx="10" cy="3" rx="6" ry="2" fill="#1f6aa8" /></svg></div>
      <div className={c2}><svg viewBox="0 0 20 20" className={S}><circle cx="10" cy="10" r="9.500" fill="url(#ballBlue)" /></svg></div>
      <div className={c2}><svg viewBox="0 0 20 20" className={S}><ellipse cx="10" cy="10" rx="8.500" ry="6" fill="none" stroke="#4f97d0" strokeWidth="2.600" /></svg></div>
      <div className="flex h-[21px] shrink-0 items-center justify-center">
        <Sol className={S} d="M4 2h12l3 6v10H1V8z" d2="M5 10h10v8H5z" />
      </div>
      <VSep />
      <div className="flex h-[26px] shrink-0 items-center justify-center"><svg viewBox="0 0 20 20" className={S}><path d="M3 7 9 2l9 7v4l-5 5-10-7z" fill="none" stroke="#4f97d0" strokeWidth="2.400" /></svg></div>
      <div className={c2}><svg viewBox="0 0 20 20" className={S}><path d="M1 14C5 6 12 12 19 2" fill="none" stroke="#4f97d0" strokeWidth="3" /><circle cx="4" cy="16" r="3" fill="none" stroke="#555" /></svg></div>
      <div className={c2}><Sol className={S} d="M1 8 8 2h4v16H4l-3-3z" d2="M13 5l6 2v8h-6z" /></div>
      <div className="flex h-[22px] shrink-0 items-center justify-center"><Sol className={S} d="M1 13 7 3h6l6 10-6 4H7z" d2="M8 4h4l3 8H6z" /></div>
      <VSep />
      <div className="flex h-[25px] shrink-0 items-center justify-center"><Sol className={S} d="M2 5l12-3v15L2 19z" d2="M14 5l4-1v12l-4 1z" /></div>
      <VSep />
      <div className="flex h-[25px] shrink-0 items-center justify-center"><Sol className={S} d="M1 11 16 4l3 2v6L5 18l-4-2z" d2="M3 12l13-6v3L4 15z" /></div>
      <VSep />
      <div className={c1}><TwoBalls className={S} a="#f0f0f0" b="#d8d8d8" /></div>
      <div className="flex h-[22px] shrink-0 items-center justify-center"><TwoBalls className={S} a="#ffffff" b="#f5f03a" /></div>
      <div className="flex h-[22px] shrink-0 items-center justify-center"><TwoBalls className={S} a="#f5f03a" b="#e4e4e4" /></div>
      <div className="flex h-[22px] shrink-0 items-center justify-center"><TwoBalls className={S} a="#eeeeee" b="#b4f030" /></div>
    </div>
  </div>
);

const Radio = ({ on }: { on?: boolean }) => (
  <span className="flex h-[13px] w-[13px] shrink-0 items-center justify-center rounded-full border border-[#333] bg-white">
    {on && <span className="h-[7px] w-[7px] rounded-full bg-[#333]" />}
  </span>
);
const Dot = ({ className }: P) => <span className={`shrink-0 rounded-full bg-[#666] ${className ?? ""}`} />;

const TransitionDialog = () => (
  <div className="absolute left-[172px] top-[268px] flex h-[176px] w-[264px] flex-col bg-[#f0f0f0] text-[12px] text-[#222] shadow-[0_2px_8px_rgba(0,0,0,0.55)]">
    <div className="flex h-[29px] shrink-0 items-center bg-white pl-[8px] text-[#9d9d9d]">Übergangskörper</div>
    <div className="flex h-[18px] shrink-0 bg-[#f7f7f7]">
      <div className="w-[81px] border-r-2 border-[#9a9a9a] bg-[#f0f0f0] pl-[14px] leading-[20px]">Übergang</div>
      <div className="w-[75px] border-r-2 border-[#9a9a9a] pl-[10px] leading-[20px]">Parameter</div>
    </div>
    <div className="flex flex-1 flex-col pl-[9px]">
      <div className="mt-[6px] flex h-[27px] w-[242px] items-center border border-[#e2e2e2] pl-[6px]">
        <Radio on />
        <span className="ml-[2px] w-[110px]">Automatisch</span>
        <Radio />
        <span className="ml-[2px]">Manuell</span>
      </div>
      <div className="mt-[7px] flex h-[28px] w-[242px] items-center">
        <span className="ml-[5px] w-[84px] text-[11.500px] font-medium">Tangential:</span>
        <Field className="h-[25px] w-[34px] text-[#1f66a8]">0</Field>
        <Field className="ml-[5px] h-[25px] w-[34px] text-[#a8701f]">0</Field>
        <div className="ml-[9px] mt-[4px] flex h-[20px] w-[68px] items-center justify-center border border-[#adadad] bg-[#e1e1e1]">Leitlinien</div>
      </div>
      <div className="mt-[9px] flex h-[24px] items-center">
        <div className="ml-[2px] flex h-[22px] w-[31px] items-center border-2 border-[#8a8a8a] bg-[#bfbfbf] pl-[5px] text-[#1f66a8]">0</div>
        <div className="ml-[3px] flex h-[22px] w-[30px] items-center border-2 border-[#8a8a8a] bg-[#bfbfbf] pl-[5px] text-[#a8701f]">0</div>
        <div className="ml-[20px] flex h-[23px] border-b border-[#777]">
          <div className="flex w-[23px] items-center justify-center gap-px border-r border-[#777] text-[11px] leading-none text-[#666]"><Dot className="h-[6px] w-[6px]" />+</div>
          <div className="flex w-[23px] items-center justify-center gap-px border-r border-[#777] text-[11px] leading-none text-[#666]"><Dot className="h-[6px] w-[6px]" />−</div>
          <div className="flex w-[48px] items-center justify-center border-r border-[#777]">
            <Dot className="h-[7px] w-[7px]" /><div className="h-px w-[17px] bg-[#555]" /><Dot className="h-[7px] w-[7px]" />
          </div>
          <svg viewBox="0 0 48 23" className="h-[23px] w-[48px] border-r border-[#777]">
            <path d="M12 15 24 8l11 7" stroke="#555" fill="none" />
            <circle cx="12" cy="15" r="3.500" fill="#666" /><circle cx="24" cy="8" r="3.500" fill="#666" /><circle cx="36" cy="15" r="3.500" fill="#666" />
          </svg>
        </div>
      </div>
      <div className="mt-[7px] flex h-[17px] items-center">
        <div className="flex h-[17px] w-[84px] items-center justify-center border border-[#0078d7] bg-[#e5f1fb]">Übernehmen</div>
        <div className="ml-[5px] flex h-[17px] w-[83px] items-center justify-center border border-[#c8c8c8] bg-[#e1e1e1]">Abbrechen</div>
      </div>
    </div>
    {/* mouse pointer */}
    <svg viewBox="0 0 12 18" className="absolute left-[55px] top-[165px] h-[18px] w-[12px]">
      <path d="M1 1v14l3.500-3 2.500 5 2.500-1-2.500-5h4.500z" fill="#fff" stroke="#222" strokeWidth="1" />
    </svg>
  </div>
);

const fieldGaps = ["", "", "mt-[2px]", "", "", "mt-px", "", "", "", "mt-[2px]"];

const StatusWindow = () => (
  <div className="absolute left-[1030px] top-[34px] flex h-[262px] w-[233px] flex-col bg-[#f0f0f0] shadow-[0_2px_8px_rgba(0,0,0,0.3)]">
    <div className="flex h-[29px] shrink-0 items-center justify-between bg-white pl-[8px] pr-[2px] text-[#9d9d9d]">
      Status
      <div className="h-[18px] w-[18px] bg-[#e3e3e3]" />
    </div>
    <div className="flex flex-1">
      <div className="w-[100px] shrink-0 border-r-2 border-[#707070]" />
      <div className="ml-[8px] flex w-[123px] flex-col">
        {fieldGaps.map((g, i) => (
          <div key={i} className={`h-[19px] border border-[#7a7a7a] bg-white ${g}`} />
        ))}
      </div>
    </div>
  </div>
);

const Edge = "#111";

const Model = () => (
  <svg viewBox="495 79 1294 801" className="absolute inset-0 h-full w-full">
    <defs>
      <radialGradient id="ballBlue" cx="40%" cy="30%" r="70%">
        <stop offset="0%" stopColor="#7fb4e6" />
        <stop offset="60%" stopColor="#1b5c9c" />
        <stop offset="100%" stopColor="#0c2f58" />
      </radialGradient>
      <radialGradient id="ballShade" cx="35%" cy="30%" r="75%">
        <stop offset="40%" stopColor="#000" stopOpacity="0" />
        <stop offset="100%" stopColor="#000" stopOpacity=".4" />
      </radialGradient>
    </defs>
    {/* construction lines */}
    <g stroke="#c9c9c9" strokeWidth="1" fill="none">
      <path d="M802 80 735 880M1127 80 1117 197M1304 560 1789 759M496 534 667 513" />
    </g>
    <path d="M496 877 747 857M520 880 747 863" stroke="#bcbcbc" strokeWidth="2" fill="none" />
    {/* back wall and rib */}
    <path d="M769 236 1154 202 1144 560 933 582 922 880 748 880 748 858z" fill="#a3a1a3" />
    <path d="M769 236 1161 194 1171 200 1154 202 800 239z" fill="#bdbbbd" />
    <path d="M1154 202 1144 552 1275 538z" fill="#8f8d8f" />
    <path d="M1154 202 1161 194 1171 200 1291 537 1275 538z" fill="#bdbbbd" />
    <g stroke={Edge} strokeWidth="1.100" fill="none">
      <path d="M769 236 1161 194M800 239 1154 202" />
      <path d="M1154 202 1144 552M1154 202 1275 538M1171 200 1291 537" />
    </g>
    {/* front wall */}
    <path d="M933 582 1304 542 1294 880 922 880z" fill="#a3a1a3" />
    <path d="M920 576 1290 537 1304 542 933 582z" fill="#bdbbbd" />
    <g stroke={Edge} strokeWidth="1.100" fill="none">
      <path d="M920 576 1290 537 1304 542 933 582M1304 542 1294 880" />
      <path d="M1144 552 1144 560" />
    </g>
    {/* profile plane */}
    <path d="M772 166 1001 259 945 880 708 880z" fill="#78eff8" fillOpacity=".23" />
    <path d="M772 166 1001 259 945 880M772 166 708 880" stroke={Edge} strokeWidth="1.100" fill="none" />
    {/* sides in front of the plane */}
    <path d="M769 236 782 242 763 842 748 858z" fill="#8e8c8e" />
    <path d="M782 242 800 240 780 840 763 842z" fill="#a3a1a3" />
    <path d="M748 858 763 842 860 880 788 880z" fill="#8e8c8e" />
    <path d="M763 842 780 840 875 880 855 880z" fill="#a3a1a3" />
    <path d="M906 579 916 582 908 880 894 880z" fill="#8e8c8e" />
    <path d="M916 582 933 582 922 880 908 880z" fill="#a3a1a3" />
    <path d="M769 236 748 858 788 880M916 582 908 880M933 582 922 880M906 579 920 576M906 579 916 582 933 582" stroke={Edge} strokeWidth="1.100" fill="none" />
    <path d="M780 840 894 828" stroke="#4b6a70" strokeWidth="1" />
    {/* transition body */}
    <path d="M782 242 800 240 920 576 902 575z" fill="#d8e070" fillOpacity=".08" stroke="#d8cf6a" strokeWidth="1" />
    <path d="M763 842 782 242M780 840 800 240M904 579 894 880" stroke="#2fe04a" strokeWidth="2" fill="none" />
    <path d="M763 842 782 242M780 840 800 240M904 579 894 880" stroke="#f2a91e" strokeWidth="2" strokeDasharray="70 90" fill="none" />
    <path d="M920 576 910 880M763 842 855 880" stroke="#f2a91e" strokeWidth="2" fill="none" />
    <path d="M780 840 875 880" stroke="#d8cf6a" strokeWidth="1" fill="none" />
    {/* axis triad */}
    <path d="M817 657 831 665 812 664 820 658M831 665 831 688" stroke="#111" strokeWidth=".9" fill="none" />
    <text x="812" y="659" fontSize="12" fontFamily="Liberation Sans" fill="#111">X</text>
    <text x="808" y="669" fontSize="10" fontFamily="Liberation Sans" fill="#111">Z</text>
    <text x="829" y="694" fontSize="12" fontFamily="Liberation Sans" fill="#111">Y</text>
  </svg>
);

export default function App() {
  return (
    <div className="flex h-[880px] w-[1789px] flex-col overflow-hidden bg-white font-['Roboto',sans-serif] text-[11.200px] leading-none">
      <Menu />
      <TopToolbar />
      <div className="flex flex-1 overflow-hidden">
        <LeftDock />
        <div className="flex flex-1 flex-col">
          <ViewToolbar />
          <div className="flex flex-1">
            <SideToolbars />
            <div className="relative flex-1 border-l border-[#b0b0b0] bg-white">
              <Model />
              <TransitionDialog />
              <StatusWindow />
            </div>
          </div>
        </div>
      </div>
    </div>
  );
}
